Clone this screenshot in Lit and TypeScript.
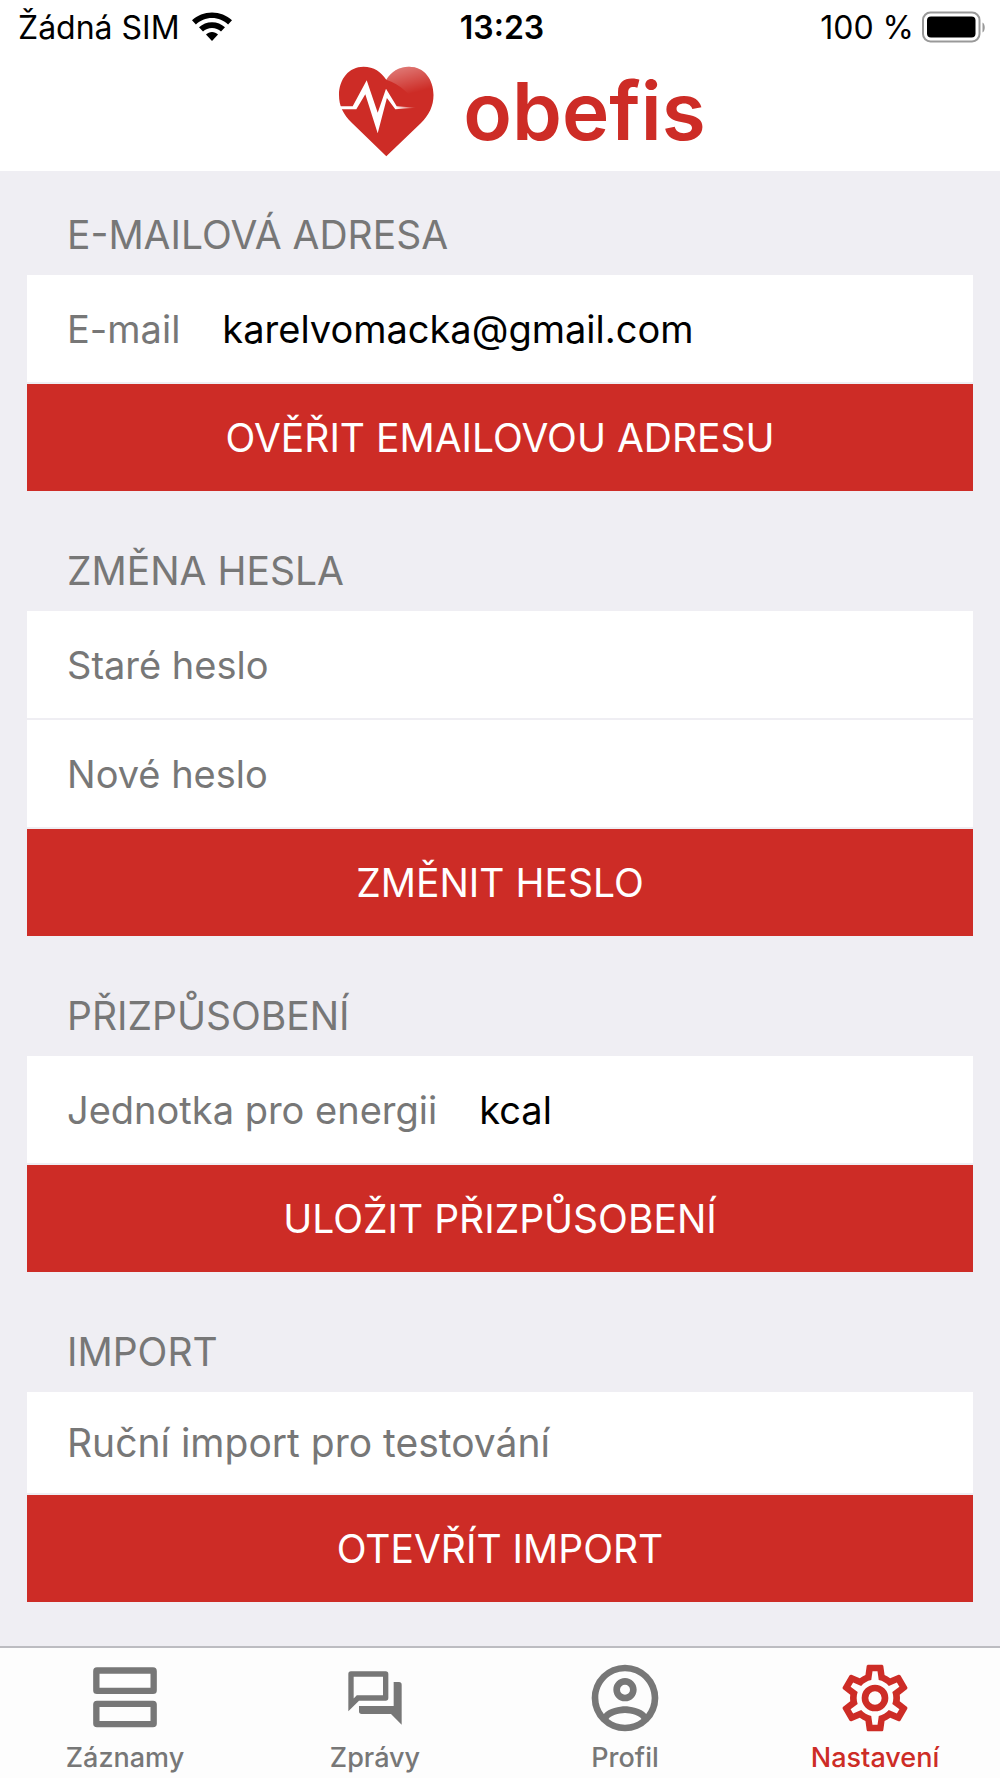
import { LitElement, html, css, svg } from "lit";
import { customElement, property, state } from "lit/decorators.js";
import { classMap } from "lit/directives/class-map.js";

const tabIcons: Record<string, unknown> = {
  agenda: svg`<g fill="none" stroke="currentColor" stroke-width="1.9" stroke-linejoin="round"><rect x="3.4" y="3.75" width="17.2" height="6.1" rx=".2"/><rect x="3.4" y="13.75" width="17.2" height="6.1" rx=".2"/></g>`,
  forum: svg`<path transform="translate(2.4 2.4) scale(.8)" d="M15,4V11H5.17L4,12.17V4H15M16,2H3A1,1 0 0,0 2,3V17L6,13H16A1,1 0 0,0 17,12V3A1,1 0 0,0 16,2M21,6H19V15H6V17A1,1 0 0,0 7,18H18L22,22V7A1,1 0 0,0 21,6Z"/>`,
  account: svg`<path d="M12,2A10,10 0 0,0 2,12A10,10 0 0,0 12,22A10,10 0 0,0 22,12A10,10 0 0,0 12,2M7.07,18.28C7.5,17.38 10.12,16.5 12,16.5C13.88,16.5 16.5,17.38 16.93,18.28C15.57,19.36 13.86,20 12,20C10.14,20 8.43,19.36 7.07,18.28M18.36,16.83C16.93,15.09 13.46,14.5 12,14.5C10.54,14.5 7.07,15.09 5.64,16.83C4.62,15.5 4,13.82 4,12C4,7.59 7.59,4 12,4C16.41,4 20,7.59 20,12C20,13.82 19.38,15.5 18.36,16.83M12,6C10.06,6 8.5,7.56 8.5,9.5C8.5,11.44 10.06,13 12,13C13.94,13 15.5,11.44 15.5,9.5C15.5,7.56 13.94,6 12,6M12,11A1.5,1.5 0 0,1 10.5,9.5A1.5,1.5 0 0,1 12,8A1.5,1.5 0 0,1 13.5,9.5A1.5,1.5 0 0,1 12,11Z"/>`,
  cog: svg`<path d="M12,8A4,4 0 0,1 16,12A4,4 0 0,1 12,16A4,4 0 0,1 8,12A4,4 0 0,1 12,8M12,10A2,2 0 0,0 10,12A2,2 0 0,0 12,14A2,2 0 0,0 14,12A2,2 0 0,0 12,10M10,22C9.75,22 9.54,21.82 9.5,21.58L9.13,18.93C8.5,18.68 7.96,18.34 7.44,17.94L4.95,18.95C4.73,19.03 4.46,18.95 4.34,18.73L2.34,15.27C2.21,15.05 2.27,14.78 2.46,14.63L4.57,12.97L4.5,12L4.57,11L2.46,9.37C2.27,9.22 2.21,8.95 2.34,8.73L4.34,5.27C4.46,5.05 4.73,4.96 4.95,5.05L7.44,6.05C7.96,5.66 8.5,5.32 9.13,5.07L9.5,2.42C9.54,2.18 9.75,2 10,2H14C14.25,2 14.46,2.18 14.5,2.42L14.87,5.07C15.5,5.32 16.04,5.66 16.56,6.05L19.05,5.05C19.27,4.96 19.54,5.05 19.66,5.27L21.66,8.73C21.79,8.95 21.73,9.22 21.54,9.37L19.43,11L19.5,12L19.43,13L21.54,14.63C21.73,14.78 21.79,15.05 21.66,15.27L19.66,18.73C19.54,18.95 19.27,19.04 19.05,18.95L16.56,17.95C16.04,18.34 15.5,18.68 14.87,18.93L14.5,21.58C14.46,21.82 14.25,22 14,22H10M11.25,4L10.88,6.61C9.68,6.86 8.62,7.5 7.85,8.39L5.44,7.35L4.69,8.65L6.8,10.2C6.4,11.37 6.4,12.64 6.8,13.8L4.68,15.36L5.43,16.66L7.86,15.62C8.63,16.5 9.68,17.14 10.87,17.38L11.24,20H12.76L13.13,17.39C14.32,17.14 15.37,16.5 16.14,15.62L18.57,16.66L19.32,15.36L17.2,13.81C17.6,12.64 17.6,11.37 17.2,10.2L19.31,8.65L18.56,7.35L16.15,8.39C15.38,7.5 14.32,6.86 13.12,6.62L12.75,4H11.25Z"/>`,
};

@customElement("status-bar")
class StatusBar extends LitElement {
  static styles = css`
    :host {
      display: grid;
      grid-template-columns: 1fr auto 1fr;
      align-items: center;
      height: 54px;
      padding: 0 14px 0 18px;
      color: #000;
      font-size: 32px;
    }
    .side {
      display: flex;
      align-items: center;
      gap: 12px;
    }
    .end {
      justify-content: flex-end;
      gap: 8px;
    }
    .time {
      font-weight: 600;
    }
    svg {
      display: block;
    }
  `;

  render() {
    return html`
      <div class="side">
        <span>Žádná SIM</span>
        <svg width="40" height="30" viewBox="0 0 40 30" aria-hidden="true">
          <path d="M20 .4C12.3 .4 5.3 3.3 0 8.3L3.9 12.4C8.1 8.5 13.8 6 20 6s11.9 2.5 16.1 6.4L40 8.3C34.7 3.3 27.7.4 20 .4Z" />
          <path d="M20 10.2c-5 0-9.5 1.9-13 5.1l4 4.2c2.4-2.2 5.5-3.6 9-3.6s6.6 1.4 9 3.6l4-4.2c-3.5-3.2-8-5.1-13-5.1Z" />
          <path d="M20 20c-2.3 0-4.4.9-6 2.4L20 29l6-6.6c-1.6-1.5-3.7-2.4-6-2.4Z" />
        </svg>
      </div>
      <span class="time">13:23</span>
      <div class="side end">
        <span>100 %</span>
        <svg width="64" height="32" viewBox="0 0 64 32" aria-hidden="true">
          <rect x="1" y="1.5" width="56.5" height="29" rx="7.5" fill="none" stroke="#999" stroke-width="2" />
          <rect x="5" y="5.5" width="48.5" height="21" rx="4" />
          <path d="M60.5 11.5c3 1.5 3 8.5 0 10Z" fill="#999" />
        </svg>
      </div>
    `;
  }
}

@customElement("brand-header")
class BrandHeader extends LitElement {
  static styles = css`
    :host {
      display: flex;
      justify-content: center;
      align-items: flex-start;
      gap: 28px;
      padding: 12px 0 0 44px;
    }
    svg {
      display: block;
    }
    .name {
      color: #cd2c26;
      font-size: 80px;
      font-weight: 600;
      line-height: 90px;
    }
  `;

  render() {
    return html`
      <svg width="97" height="92" viewBox="0 0 97 92" aria-hidden="true">
        <defs>
          <linearGradient id="shine" gradientUnits="userSpaceOnUse" x1="68" y1="0" x2="75" y2="27">
            <stop offset="0" stop-color="#fff" stop-opacity=".36" />
            <stop offset="1" stop-color="#fff" stop-opacity="0" />
          </linearGradient>
          <linearGradient id="fade" gradientUnits="userSpaceOnUse" x1="58" y1="0" x2="79" y2="0">
            <stop offset="0" stop-color="#fff" />
            <stop offset="1" stop-color="#fff" stop-opacity="0" />
          </linearGradient>
        </defs>
        <path fill="#cd2c26" d="M48.3 90.3L14 57C5 48 1 40 1 29C1 13 11 .7 25.5 .7C36 .7 43 6 48.3 13.7C53 6 61 .7 71 .7C86 .7 95.5 13 95.5 29C95.5 40 91 49 83 57Z" />
        <path fill="url(#shine)" d="M48.3 13.7C53 6 61 .7 71 .7C86 .7 95.5 13 95.5 29L80 40C74 30 62 18 48.3 13.7Z" />
        <path fill="url(#fade)" d="M2 40.3H14.7L28.7 14.3L39.7 46.7L48 22.7L58.7 40.3L78 41.7L57.3 43.3L48.9 32L39.7 67.3L27.3 28.3L18.3 43.3H2Z" />
      </svg>
      <span class="name">obefis</span>
    `;
  }
}

@customElement("tab-bar")
class TabBar extends LitElement {
  @property() current = "Nastavení";

  static styles = css`
    :host {
      display: block;
    }
    .tabs {
      display: grid;
      grid-template-columns: repeat(4, 1fr);
      border-top: 2px solid #bcbcc1;
      background: #fdfdfd;
    }
    .tab {
      display: flex;
      flex-direction: column;
      align-items: center;
      padding-top: 10px;
      color: #777;
      font-size: 27px;
      font-weight: 500;
      line-height: 40px;
      text-decoration: none;
    }
    .active {
      color: #cd2c26;
    }
    svg {
      display: block;
      fill: currentColor;
    }
  `;

  private tabs = [
    { name: "Záznamy", icon: "agenda" },
    { name: "Zprávy", icon: "forum" },
    { name: "Profil", icon: "account" },
    { name: "Nastavení", icon: "cog" },
  ];

  render() {
    return html`<nav class="tabs">
      ${this.tabs.map(
        (t) => html`<a href="#${t.icon}" class=${classMap({ tab: true, active: t.name === this.current })}>
          <svg width="80" height="80" viewBox="0 0 24 24" aria-hidden="true">${tabIcons[t.icon]}</svg>
          <span>${t.name}</span>
        </a>`,
      )}
    </nav>`;
  }
}

@customElement("app-root")
class AppRoot extends LitElement {
  @state() private email = "karelvomacka@gmail.com";

  static styles = css`
    :host {
      display: flex;
      flex-direction: column;
      min-height: 100vh;
      background: #efeef3;
      font-family: Inter, "Liberation Sans", sans-serif;
    }
    .top {
      padding-bottom: 13px;
      background: #fff;
    }
    .content {
      flex: 1;
      display: flex;
      flex-direction: column;
      gap: 40px;
      padding: 24px 27px 40px;
    }
    .heading {
      margin: 0;
      padding: 0 40px;
      color: #777;
      font-size: 39px;
      font-weight: 400;
      line-height: 80px;
    }
    .row {
      display: flex;
      align-items: center;
      gap: 42px;
      height: 109px;
      box-sizing: border-box;
      padding: 0 40px;
      border-bottom: 2px solid #efeef3;
      background: #fff;
      color: #777;
      font-size: 38px;
    }
    .note {
      height: 103px;
      margin: 0;
      font-size: 39px;
    }
    .field {
      flex: 1;
      min-width: 0;
      height: 80px;
      padding: 0;
      border: 0;
      outline: 0;
      appearance: none;
      background: none;
      color: #000;
      font: inherit;
    }
    .field::placeholder {
      color: #777;
      opacity: 1;
    }
    .action {
      display: block;
      width: 100%;
      height: 107px;
      padding: 0;
      border: 0;
      background: #cd2c26;
      color: #fff;
      font: inherit;
      font-size: 39px;
    }
  `;

  render() {
    return html`
      <header class="top">
        <status-bar></status-bar>
        <brand-header></brand-header>
      </header>
      <main class="content">
        <section>
          <h2 class="heading">E-MAILOVÁ ADRESA</h2>
          <div class="row">
            <label for="email">E-mail</label>
            <input class="field" id="email" type="email" .value=${this.email} />
          </div>
          <button class="action">OVĚŘIT EMAILOVOU ADRESU</button>
        </section>
        <section>
          <h2 class="heading">ZMĚNA HESLA</h2>
          <div class="row">
            <input class="field" type="password" placeholder="Staré heslo" aria-label="Staré heslo" />
          </div>
          <div class="row">
            <input class="field" type="password" placeholder="Nové heslo" aria-label="Nové heslo" />
          </div>
          <button class="action">ZMĚNIT HESLO</button>
        </section>
        <section>
          <h2 class="heading">PŘIZPŮSOBENÍ</h2>
          <div class="row">
            <label for="unit">Jednotka pro energii</label>
            <select class="field" id="unit">
              <option>kcal</option>
            </select>
          </div>
          <button class="action">ULOŽIT PŘIZPŮSOBENÍ</button>
        </section>
        <section>
          <h2 class="heading">IMPORT</h2>
          <p class="row note">Ruční import pro testování</p>
          <button class="action">OTEVŘÍT IMPORT</button>
        </section>
      </main>
      <tab-bar></tab-bar>
    `;
  }
}
